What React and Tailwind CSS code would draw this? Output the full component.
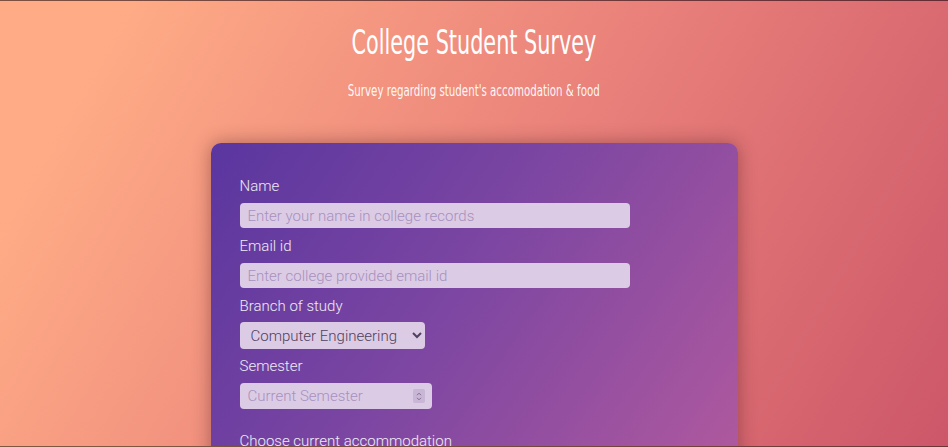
import { useState } from 'react'

const Label = ({ children }) => (
    <div className="text-[15px] leading-[24px] font-light text-white/90">{children}</div>
)

const App = () => {
    const [branch, setBranch] = useState('ce')

    return (
        <div
            className="h-[447px] overflow-hidden border-t border-b border-black/50 bg-[linear-gradient(120deg,#ffac86_10%,#e9807a_55%,#cc5769_100%)] flex flex-col items-center"
            style={{ fontFamily: 'Roboto, "Noto Sans", sans-serif' }}
        >
            {/* ヘッダー */}
            <h1
                className="mt-[22px] text-[33px] leading-[40px] text-white scale-x-[0.70]"
                style={{ fontFamily: '"Liberation Sans Narrow", "DejaVu Sans Condensed", sans-serif' }}
            >
                College Student Survey
            </h1>
            <p
                className="mt-[18px] text-[15px] leading-[20px] text-white/95 scale-x-[0.76]"
                style={{ fontFamily: '"Liberation Sans Narrow", "DejaVu Sans Condensed", sans-serif' }}
            >
                Survey regarding student's accomodation &amp; food
            </p>

            {/* フォーム */}
            <form
                className="mt-[42px] w-[527px] shrink-0 rounded-[10px] bg-[linear-gradient(125deg,#5a369f_0%,#7c46a2_45%,#b25a9e_100%)] shadow-[0_0_18px_rgba(80,30,40,0.45)] pt-[31px] px-[29px] pb-10"
                onSubmit={(e) => e.preventDefault()}
            >
                <Label>Name</Label>
                <input
                    type="text"
                    placeholder="Enter your name in college records"
                    className="mt-[5px] block w-[390px] h-[25px] rounded-[4px] bg-[#dccbe5] px-2 text-[15px] font-light text-[#4a3a5a] placeholder:text-[#a691bd] outline-none"
                />
                <div className="mt-[6px]">
                    <Label>Email id</Label>
                </div>
                <input
                    type="email"
                    placeholder="Enter college provided email id"
                    className="mt-[5px] block w-[390px] h-[25px] rounded-[4px] bg-[#dccbe5] px-2 text-[15px] font-light text-[#4a3a5a] placeholder:text-[#a691bd] outline-none"
                />
                <div className="mt-[6px]">
                    <Label>Branch of study</Label>
                </div>
                <select
                    value={branch}
                    onChange={(e) => setBranch(e.target.value)}
                    className="mt-[4px] block w-[185px] h-[27px] rounded-[4px] bg-[#dccbe5] pl-[7px] pr-1 text-[15px] font-light text-[#4f4160] outline-none"
                >
                    <option value="ce">Computer Engineering</option>
                    <option value="it">Information Technology</option>
                    <option value="me">Mechanical Engineering</option>
                </select>
                <div className="mt-[5px]">
                    <Label>Semester</Label>
                </div>
                <div className="mt-[5px] flex items-center w-[192px] h-[26px] rounded-[4px] bg-[#dccbe5] pl-2 pr-[7px]">
                    <input
                        type="text"
                        placeholder="Current Semester"
                        className="flex-1 min-w-0 bg-transparent text-[15px] font-light text-[#4a3a5a] placeholder:text-[#a691bd] outline-none"
                    />
                    <span className="flex flex-col items-center justify-center w-[12px] h-[14px] bg-[#c9b6d6] rounded-[2px]">
                        <svg width="6" height="9" viewBox="0 0 6 9" fill="none" stroke="#7d6c8e" strokeWidth="1">
                            <path d="M1 3.2 L3 1.2 L5 3.2" />
                            <path d="M1 5.8 L3 7.8 L5 5.8" />
                        </svg>
                    </span>
                </div>
                <div className="mt-[20px]">
                    <Label>Choose current accommodation</Label>
                </div>
            </form>
        </div>
    )
}

export default App
